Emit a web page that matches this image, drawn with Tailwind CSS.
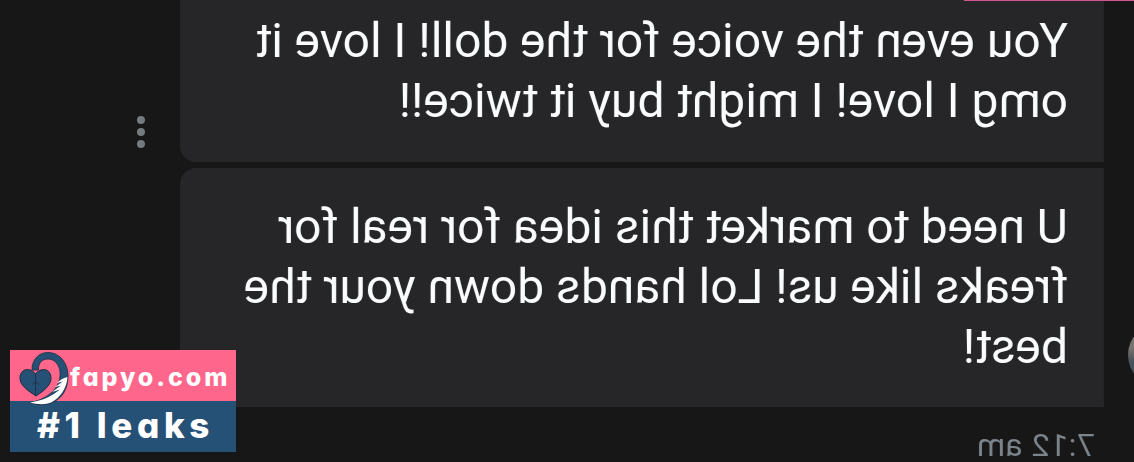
<!DOCTYPE html>
<html lang="en">
  <head>
    <meta charset="UTF-8" />
    <meta name="viewport" content="width=device-width, initial-scale=1.0" />
    <title>Messages</title>
    <script src="https://cdn.jsdelivr.net/npm/@tailwindcss/browser@4"></script>
  </head>
  <body class="bg-[#171718] h-screen overflow-hidden relative">
    <!-- Mirrored chat -->
    <main
      class="-scale-x-100 h-[462px] relative font-['Roboto',sans-serif] text-[#fbfcfd] text-[48px] leading-[60px] tracking-[-0.04px] whitespace-nowrap"
    >
      <div class="flex items-start pl-[30px]">
        <div class="w-[924px] h-[162px] bg-[#262628] rounded-br-2xl pl-[36px] pt-[11px]">
          <p>You even the voice for the doll! I love it</p>
          <p>omg I love! I might buy it twice!!</p>
        </div>
        <!-- Menu dots -->
        <div class="flex flex-col gap-1 ml-[35px] mt-[116px]">
          <span class="size-2 rounded-full bg-[#747c80]"></span>
          <span class="size-2 rounded-full bg-[#747c80]"></span>
          <span class="size-2 rounded-full bg-[#747c80]"></span>
        </div>
      </div>
      <div class="ml-[30px] mt-[6px] w-[924px] h-[239px] bg-[#262628] rounded-tr-2xl pl-[36px] pt-[29px]">
        <p>U need to market this idea for real for</p>
        <p>freaks like us! Lol hands down your the</p>
        <p>best!</p>
      </div>
      <p class="pl-[39px] mt-[21px] text-[32px] leading-[34px] tracking-[0.5px] text-[#7c848c]">7:12 am</p>

      <!-- Avatar edge -->
      <div class="absolute -left-[58px] top-[323px] size-16 rounded-full bg-linear-to-b from-[#77736f] from-40% to-[#48525a] to-60%"></div>
      <div class="absolute left-0 top-0 w-[170px] h-px bg-[#d0578b]"></div>
    </main>

    <!-- Site badge -->
    <div
      class="absolute left-[10px] top-[350px] w-[226px] h-[102px] flex flex-col text-white font-['Inter',sans-serif] font-extrabold [font-feature-settings:'cv11'] whitespace-nowrap"
    >
      <div class="h-[51px] bg-[#ff668b] pl-[60px] pt-[10px] text-[25px] leading-[34px] tracking-[2.9px]">fapyo.com</div>
      <div class="h-[51px] bg-[#265176] pl-[27px] pt-[2px] text-[35px] leading-[44px] tracking-[4.6px]">#1 leaks</div>
      <svg class="absolute left-0 top-0" width="70" height="60" viewBox="0 0 70 60">
        <path
          d="M22 20C22 9 29 2.500 38 2.500C49 2.500 58 12 58 26C58 42 49 54 32 54.500C28 54.500 24 54 20 52.500C34 50 49 41 50 26C51 17 46 9 38 9C32 9 28 13 28.500 20Z"
          fill="#265176" stroke="#1d2c3c" stroke-width="0.800"
        />
        <path
          d="M57.500 27C53 28 50 30 47 33L53 31.500L45 37L51 35.500L42 42L50 39.500L44 44C38 48 30 51 20 52.500C29 55 39 55 45 50C52 45 57 36 57.500 27Z"
          fill="#fff"
        />
        <path
          d="M26 46C20 42 10 36 10 28.500C10 17.500 21 17.500 25.500 24C30 17.500 41 17.500 41 28.500C41 36 32 42 26 46Z"
          fill="#265176" stroke="#1d2c3c" stroke-width="1"
        />
        <path d="M25.500 24V45M25.500 32L22.500 34.500M25.500 32L29 34.500" fill="none" stroke="#1d2c3c" stroke-width="0.800" />
      </svg>
    </div>
  </body>
</html>
